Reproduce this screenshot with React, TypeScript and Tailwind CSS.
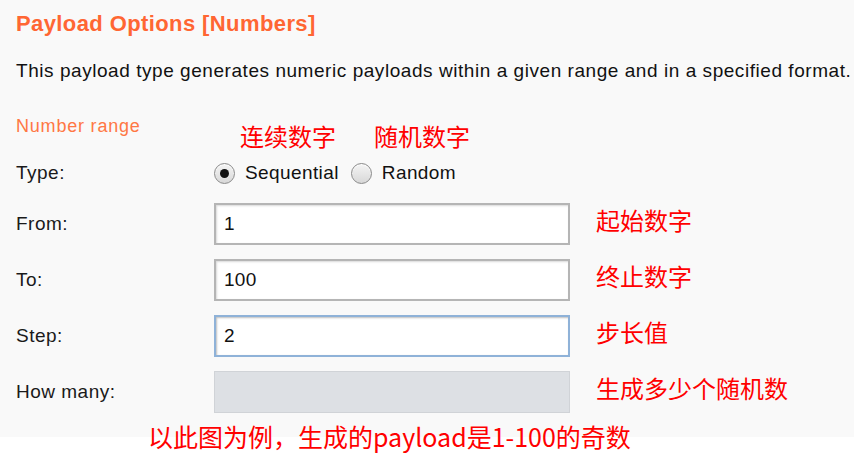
import React from "react";

const FONT = { fontFamily: '"Liberation Sans", Arial, "Noto Sans CJK SC", sans-serif' };

const Note: React.FC<{ children: React.ReactNode; className?: string }> = ({ children, className = "" }) => (
  <span className={`leading-none text-[#ff0000] ${className}`} style={{ fontFamily: '"Noto Sans CJK SC", sans-serif' }}>
    {children}
  </span>
);

const Radio: React.FC<{ checked?: boolean }> = ({ checked }) => (
  <span className="flex h-[21px] w-[21px] items-center justify-center rounded-full border border-[#8a8a8a] bg-gradient-to-b from-[#f4f4f4] to-[#d8d8d8] shadow-[inset_0_1px_1px_rgba(255,255,255,0.9)]">
    {checked && <span className="h-[9px] w-[9px] rounded-full bg-[#111]" />}
  </span>
);

const Field: React.FC<{ value?: string; focused?: boolean; disabled?: boolean }> = ({ value, focused, disabled }) => (
  <div
    className={`flex h-[42px] w-[356px] items-center px-[8px] text-[19px] tracking-[0.3px] text-[#111] ${
      disabled
        ? "border border-[#d0d3d7] bg-[#dde0e4]"
        : focused
        ? "border-2 border-[#8fb2d8] bg-white shadow-[inset_1px_1px_2px_rgba(0,0,0,0.25)]"
        : "border-2 border-[#b5b5b5] bg-white shadow-[inset_1px_1px_2px_rgba(0,0,0,0.15)]"
    }`}
  >
    {value}
  </div>
);

const Row: React.FC<{ label: string; children: React.ReactNode; note?: string }> = ({ label, children, note }) => (
  <div className="flex h-[42px] items-center">
    <div className="w-[198px] text-[19px] tracking-[0.5px] text-[#1a1a1a]">{label}</div>
    {children}
    {note && <Note className="ml-[26px] -mt-[8px] text-[24px]">{note}</Note>}
  </div>
);

export default function App() {
  return (
    <div className="w-[854px] h-[469px] overflow-hidden bg-white" style={FONT}>
      <div className="bg-[#f9f9f9] h-[437px] pl-[16px] pt-[12px]">
        <h1 className="text-[22px] font-bold leading-[24px] tracking-[0.4px] text-[#ff6633]">Payload Options [Numbers]</h1>
        <p className="mt-[24px] whitespace-nowrap text-[19px] leading-[22px] tracking-[0.55px] text-[#111]">
          This payload type generates numeric payloads within a given range and in a specified format.
        </p>
        <div className="mt-[34px] text-[18px] leading-[20px] tracking-[0.8px] text-[#ff7744]">Number range</div>
        <div className="ml-[224px] -mt-[12px] flex gap-[38px]">
          <Note className="text-[24px]">连续数字</Note>
          <Note className="text-[24px]">随机数字</Note>
        </div>
        <div className="mt-[12px] flex h-[26px] items-center">
          <div className="w-[198px] text-[19px] tracking-[0.5px] text-[#1a1a1a]">Type:</div>
          <Radio checked />
          <span className="ml-[10px] text-[19px] tracking-[0.4px] text-[#111]">Sequential</span>
          <span className="ml-[12px]"><Radio /></span>
          <span className="ml-[10px] text-[19px] tracking-[0.4px] text-[#111]">Random</span>
        </div>
        <div className="mt-[17px] flex flex-col gap-[14px]">
          <Row label="From:" note="起始数字"><Field value="1" /></Row>
          <Row label="To:" note="终止数字"><Field value="100" /></Row>
          <Row label="Step:" note="步长值"><Field value="2" focused /></Row>
          <Row label="How many:" note="生成多少个随机数"><Field disabled /></Row>
        </div>
      </div>
      <div className="-mt-[13px] pl-[148px]">
        <Note className="text-[25px]">以此图为例，生成的payload是1-100的奇数</Note>
      </div>
    </div>
  );
}
